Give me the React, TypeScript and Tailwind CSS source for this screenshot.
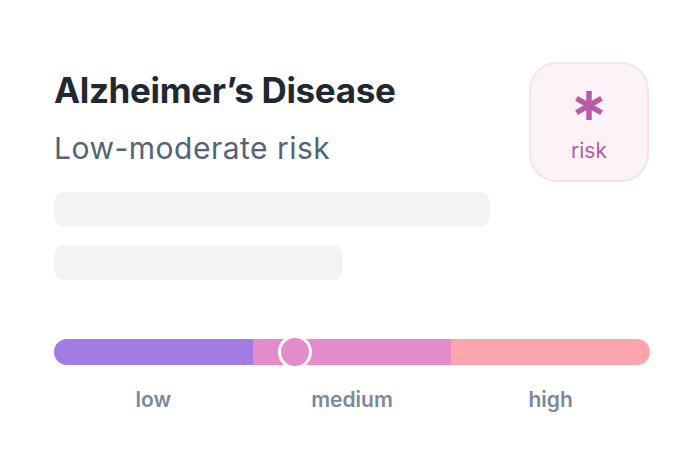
export default function App() {
	return (
		<div className="w-[699px] h-[476px] bg-white font-['Inter',sans-serif]">
			<div className="px-[54px] pt-[62px]">
				<div className="flex justify-between">
					<div className="flex-1">
						<h1 className="text-[35px] font-bold text-[#222831] leading-none mt-[11px] tracking-[-0.35px]">
							Alzheimer’s Disease
						</h1>
						<p className="text-[30px] text-[#546375] leading-none mt-[25px] tracking-[0.5px]">Low-moderate risk</p>
					</div>
					<div className="w-[120px] h-[120px] rounded-[28px] bg-[#fbf3f8] border-2 border-[#f2e3ed] flex flex-col items-center justify-center -mr-[4px]">
						{/* asterisk mark */}
						<svg width="30" height="29" viewBox="0 0 30 29" className="mt-[7px]">
							<g stroke="#b95ba6" strokeWidth="5.5" strokeLinecap="butt">
								<line x1="15" y1="0" x2="15" y2="29" />
								<line x1="2.5" y1="7.3" x2="27.5" y2="21.7" />
								<line x1="2.5" y1="21.7" x2="27.5" y2="7.3" />
							</g>
						</svg>
						<span className="text-[21px] text-[#b95ba6] leading-none mt-[20px]">risk</span>
					</div>
				</div>
				<div className="mt-[10px] w-[436px] h-[35px] rounded-[10px] bg-[#f3f3f3]" />
				<div className="mt-[18px] w-[289px] h-[35px] rounded-[10px] bg-[#f3f3f3]" />
				<div className="relative mt-[59px] h-[26px] flex rounded-full overflow-hidden w-[596px]">
					<div className="flex-1 bg-[#a37be2]" />
					<div className="flex-1 bg-[#e48bca]" />
					<div className="flex-1 bg-[#fea4ac]" />
				</div>
				<div className="relative w-[596px]">
					<div className="absolute left-[224px] top-[-30px] w-[34px] h-[34px] rounded-full bg-[#e48bca] border-[3px] border-white" />
				</div>
				<div className="flex w-[596px] mt-[24px] text-[21px] font-semibold text-[#7d889a] leading-none">
					<div className="flex-1 text-center">low</div>
					<div className="flex-1 text-center">medium</div>
					<div className="flex-1 text-center">high</div>
				</div>
			</div>
		</div>
	);
}
